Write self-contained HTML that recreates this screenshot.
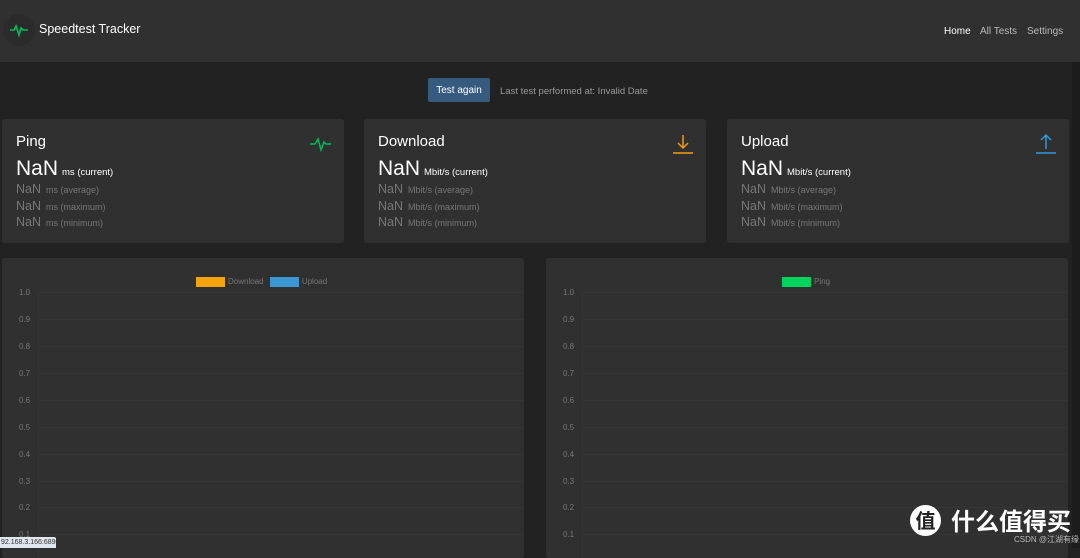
<!DOCTYPE html>
<html><head><meta charset="utf-8"><style>
*{margin:0;padding:0;box-sizing:border-box}
body{width:1080px;height:548px;overflow:hidden;background:#222;font-family:"Liberation Sans",sans-serif;position:relative;color:#fff}
.hdr{position:absolute;left:0;top:0;width:1080px;height:62px;background:#303030}
.logo{position:absolute;left:3px;top:14px;width:32px;height:32px;border-radius:50%;background:#2b2b2b}
.title{position:absolute;left:39px;top:22px;font-size:12.5px;color:#fff}
.nav{position:absolute;top:26px;font-size:10px;color:#bbb}
.btn{position:absolute;left:428px;top:78px;width:62px;height:24px;background:#375a7f;border-radius:2px;font-size:10px;color:#fff;text-align:center;line-height:25px}
.last{position:absolute;left:500px;top:86px;font-size:9.5px;color:#999}
.card{position:absolute;top:119px;height:124px;width:342px;background:#303030;border-radius:3px}
.card h2{position:absolute;left:14px;top:14px;font-size:15px;font-weight:normal}
.big{position:absolute;left:14px;top:38px;font-size:21px}
.big span{font-size:9.5px;margin-left:4px}
.sm{position:absolute;left:14px;font-size:12.5px;color:#777}
.sm span{font-size:9px;margin-left:5px}
.card svg{position:absolute;right:12px;top:14px}
.chart{position:absolute;top:258px;height:300px;width:522px;background:#303030;border-radius:3px}
.yl{position:absolute;left:17px;font-size:8px;color:#777}
.gl{position:absolute;left:36px;right:0;height:1px;background:#353535}
.ax{position:absolute;left:36px;top:34px;bottom:0;width:1px;background:#353535}
.leg{position:absolute;top:19px;font-size:8px;color:#777}
.sw{display:inline-block;width:29px;height:10px;vertical-align:middle;margin-right:3px}
.sb{position:absolute;left:1072px;top:62px;width:8px;height:486px;background:#1c1c1c}
</style></head><body>
<div class="hdr">
<div class="logo"><svg width="32" height="32" viewBox="0 0 32 32"><polyline points="7,16 11,16 13,12 16,21 18,14 20,16 25,16" fill="none" stroke="#00bc5a" stroke-width="1.6"/></svg></div>
<div class="title">Speedtest Tracker</div>
<div class="nav" style="left:944px;color:#fff">Home</div>
<div class="nav" style="left:980px">All Tests</div>
<div class="nav" style="left:1027px">Settings</div>
</div>
<div class="btn">Test again</div>
<div class="last">Last test performed at: Invalid Date</div>

<div class="card" style="left:2px">
<h2>Ping</h2>
<svg width="22" height="22" viewBox="0 0 22 22"><polyline points="0,11 5,11 8,6 11,17 14,9 16,11 21,11" fill="none" stroke="#00bc5a" stroke-width="1.5"/></svg>
<div class="big">NaN<span>ms (current)</span></div>
<div class="sm" style="top:63px">NaN<span>ms (average)</span></div>
<div class="sm" style="top:80px">NaN<span>ms (maximum)</span></div>
<div class="sm" style="top:96px">NaN<span>ms (minimum)</span></div>
</div>
<div class="card" style="left:364px">
<h2>Download</h2>
<svg width="22" height="22" viewBox="0 0 22 22"><path d="M11 2V15M6 10L11 15L16 10M1 20H21" fill="none" stroke="#f39c12" stroke-width="1.5"/></svg>
<div class="big">NaN<span>Mbit/s (current)</span></div>
<div class="sm" style="top:63px">NaN<span>Mbit/s (average)</span></div>
<div class="sm" style="top:80px">NaN<span>Mbit/s (maximum)</span></div>
<div class="sm" style="top:96px">NaN<span>Mbit/s (minimum)</span></div>
</div>
<div class="card" style="left:727px">
<h2>Upload</h2>
<svg width="22" height="22" viewBox="0 0 22 22"><path d="M11 16V2M6 7L11 2L16 7M1 20H21" fill="none" stroke="#3498db" stroke-width="1.5"/></svg>
<div class="big">NaN<span>Mbit/s (current)</span></div>
<div class="sm" style="top:63px">NaN<span>Mbit/s (average)</span></div>
<div class="sm" style="top:80px">NaN<span>Mbit/s (maximum)</span></div>
<div class="sm" style="top:96px">NaN<span>Mbit/s (minimum)</span></div>
</div>

<div class="chart" style="left:2px">
<div class="leg" style="left:194px"><span class="sw" style="background:#f5a30a"></span>Download <span class="sw" style="background:#3a97d4;margin-left:4px"></span>Upload</div>
<div class="ax"></div>
<div class="yl" style="top:30px">1.0</div><div class="gl" style="top:34px"></div>
<div class="yl" style="top:57px">0.9</div><div class="gl" style="top:61px"></div>
<div class="yl" style="top:84px">0.8</div><div class="gl" style="top:88px"></div>
<div class="yl" style="top:111px">0.7</div><div class="gl" style="top:115px"></div>
<div class="yl" style="top:138px">0.6</div><div class="gl" style="top:142px"></div>
<div class="yl" style="top:165px">0.5</div><div class="gl" style="top:169px"></div>
<div class="yl" style="top:192px">0.4</div><div class="gl" style="top:196px"></div>
<div class="yl" style="top:219px">0.3</div><div class="gl" style="top:223px"></div>
<div class="yl" style="top:245px">0.2</div><div class="gl" style="top:249px"></div>
<div class="yl" style="top:272px">0.1</div><div class="gl" style="top:276px"></div>
</div>
<div class="chart" style="left:546px">
<div class="leg" style="left:236px"><span class="sw" style="background:#00d45f"></span>Ping</div>
<div class="ax"></div>
<div class="yl" style="top:30px">1.0</div><div class="gl" style="top:34px"></div>
<div class="yl" style="top:57px">0.9</div><div class="gl" style="top:61px"></div>
<div class="yl" style="top:84px">0.8</div><div class="gl" style="top:88px"></div>
<div class="yl" style="top:111px">0.7</div><div class="gl" style="top:115px"></div>
<div class="yl" style="top:138px">0.6</div><div class="gl" style="top:142px"></div>
<div class="yl" style="top:165px">0.5</div><div class="gl" style="top:169px"></div>
<div class="yl" style="top:192px">0.4</div><div class="gl" style="top:196px"></div>
<div class="yl" style="top:219px">0.3</div><div class="gl" style="top:223px"></div>
<div class="yl" style="top:245px">0.2</div><div class="gl" style="top:249px"></div>
<div class="yl" style="top:272px">0.1</div><div class="gl" style="top:276px"></div>
</div>
<div class="sb"></div>
<div style="position:absolute;left:0;top:537px;width:56px;height:11px;background:#dfe6ee;font-size:7px;color:#333;line-height:11px;padding-left:1px;border-radius:0 2px 0 0;overflow:hidden;white-space:nowrap">92.168.3.166:6890</div>
<div style="position:absolute;left:910px;top:505px;width:31px;height:31px;border-radius:50%;background:#fff;color:#222;font-family:'Noto Sans CJK SC',sans-serif;font-size:20px;text-align:center;line-height:30px;font-weight:bold">值</div>
<div style="position:absolute;left:951px;top:504px;font-family:'Noto Sans CJK SC',sans-serif;font-size:24px;color:#fff;font-weight:bold;line-height:32px">什么值得买</div>
<div style="position:absolute;left:1014px;top:534px;font-family:'Liberation Sans','Noto Sans CJK SC',sans-serif;font-size:8px;color:#bbb">CSDN @江湖有缘</div>
</body></html>
